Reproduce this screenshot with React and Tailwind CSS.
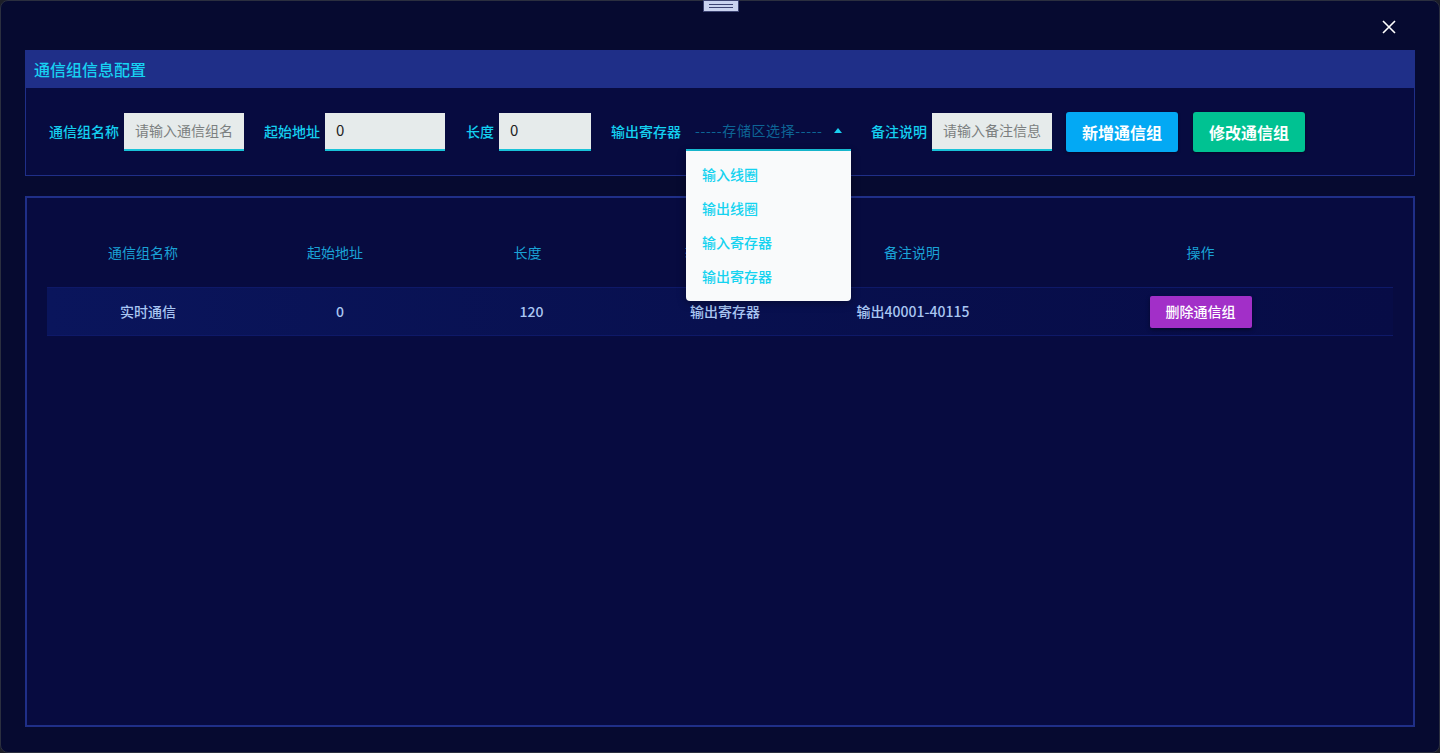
const font = { fontFamily: '"Noto Sans CJK SC", "Noto Sans", sans-serif' };

const Field = ({ label, width, value, placeholder }) => (
  <div className="flex items-center">
    <span className="text-[14px] font-medium text-[#14d0f0] mr-[5px] whitespace-nowrap">{label}</span>
    <div
      className={`${width} h-[38px] bg-[#e6ebeb] border-b-2 border-[#19c3d8] flex items-center px-[11px]`}
    >
      {value ? (
        <span className="text-[15px] text-[#222]">{value}</span>
      ) : (
        <span className="text-[14px] text-[#7b7f80] whitespace-nowrap overflow-hidden">{placeholder}</span>
      )}
    </div>
  </div>
);

const App = () => {
  const columns = [
    { title: "通信组名称", w: "w-[192px]" },
    { title: "起始地址", w: "w-[192px]" },
    { title: "长度", w: "w-[193px]" },
    { title: "输出寄存器", w: "w-[192px]" },
    { title: "备注说明", w: "w-[192px]" },
    { title: "操作", w: "flex-1" },
  ];

  const cell = "text-center text-[14px] font-medium text-[#a9c6f2]";

  return (
    <div className="h-[753px] w-[1440px] bg-[#1c1e28] overflow-hidden" style={font}>
      <div className="relative h-[753px] rounded-[8px] border border-[#2b2f3f] bg-[#060a30] flex flex-col px-[24px]">
        {/* drag handle */}
        <div className="absolute top-[-1px] left-[702px] w-[36px] h-[12px] bg-[#c9d2ef] border border-[#3c4372] flex flex-col items-center justify-center gap-[2px]">
          <div className="w-[24px] h-[1px] bg-[#3c4372]" />
          <div className="w-[24px] h-[1px] bg-[#3c4372]" />
        </div>

        {/* close */}
        <button className="absolute top-[18px] right-[42px] w-[16px] h-[16px] flex items-center justify-center">
          <svg width="16" height="16" viewBox="0 0 16 16" fill="none" stroke="#ffffff" strokeWidth="1.6">
            <path d="M2 2 L14 14 M14 2 L2 14" />
          </svg>
        </button>

        {/* config panel */}
        <div className="mt-[49px] h-[126px] flex flex-col">
          <div className="h-[38px] bg-[#1f2f88] flex items-center pl-[9px]">
            <span className="text-[16px] font-medium text-[#17d2f2]">通信组信息配置</span>
          </div>
          <div className="flex-1 bg-[#070b40] border border-t-0 border-[#1f2f88] flex items-center pl-[23px]">
            <Field label="通信组名称" width="w-[120px]" placeholder="请输入通信组名" />
            <div className="ml-[20px]">
              <Field label="起始地址" width="w-[120px]" value="0" />
            </div>
            <div className="ml-[21px]">
              <Field label="长度" width="w-[92px]" value="0" />
            </div>
            <div className="ml-[20px] flex items-center">
              <span className="text-[14px] font-medium text-[#14d0f0] mr-[5px] whitespace-nowrap">输出寄存器</span>
              <div className="relative w-[165px] h-[38px] border-b-2 border-[#19c8e0] flex items-center pl-[9px] pr-[8px] justify-between">
                <span className="text-[14px] tracking-[0.6px] text-[#0d6596] whitespace-nowrap">-----存储区选择-----</span>
                <svg width="8" height="5" viewBox="0 0 8 5" className="mr-[1px]">
                  <path d="M0 5 L4 0 L8 5 Z" fill="#19d0f0" />
                </svg>
                {/* dropdown */}
                <div className="absolute top-[38px] left-0 w-[165px] h-[150px] bg-[#f9fafb] rounded-b-[4px] shadow-[0_2px_8px_rgba(0,0,0,0.35)] z-10 flex flex-col pt-[7px] pl-[16px]">
                  {["输入线圈", "输出线圈", "输入寄存器", "输出寄存器"].map((t) => (
                    <div key={t} className="h-[34px] flex items-center text-[14px] font-medium text-[#15d3f0]">
                      {t}
                    </div>
                  ))}
                </div>
              </div>
            </div>
            <div className="ml-[20px]">
              <Field label="备注说明" width="w-[120px]" placeholder="请输入备注信息" />
            </div>
            <button className="ml-[14px] w-[112px] h-[40px] rounded-[3px] bg-[#03a9f4] text-white text-[16px] font-bold shadow-[0_1px_3px_rgba(0,0,0,0.4)]">
              新增通信组
            </button>
            <button className="ml-[15px] w-[112px] h-[40px] rounded-[3px] bg-[#00c292] text-white text-[16px] font-bold shadow-[0_1px_3px_rgba(0,0,0,0.4)]">
              修改通信组
            </button>
          </div>
        </div>

        {/* table panel */}
        <div className="mt-[20px] h-[531px] bg-[#070b40] border-2 border-[#1f2f88] px-[20px] pt-[19px]">
          <div className="flex h-[70px] items-center">
            {columns.map((c) => (
              <div key={c.title} className={`${c.w} text-center text-[14px] text-[#1aa2d6]`}>
                {c.title}
              </div>
            ))}
          </div>
          <div className="flex h-[49px] items-center border-y border-[#0e1968] bg-gradient-to-r from-[#0a155c] via-[#08104f] to-[#070c46]">
            <div className={`w-[192px] pl-[10px] ${cell}`}>实时通信</div>
            <div className={`w-[192px] pl-[10px] ${cell}`}>0</div>
            <div className={`w-[193px] pl-[8px] ${cell}`}>120</div>
            <div className={`w-[192px] pl-[10px] ${cell}`}>输出寄存器</div>
            <div className={`w-[192px] pl-[2px] ${cell}`}>输出40001-40115</div>
            <div className="flex-1 flex justify-center">
              <button className="w-[102px] h-[32px] rounded-[2px] bg-[#a22fc8] text-white text-[14px] font-medium shadow-[0_2px_4px_rgba(0,0,0,0.4)]">
                删除通信组
              </button>
            </div>
          </div>
        </div>
      </div>
    </div>
  );
};

export default App;
